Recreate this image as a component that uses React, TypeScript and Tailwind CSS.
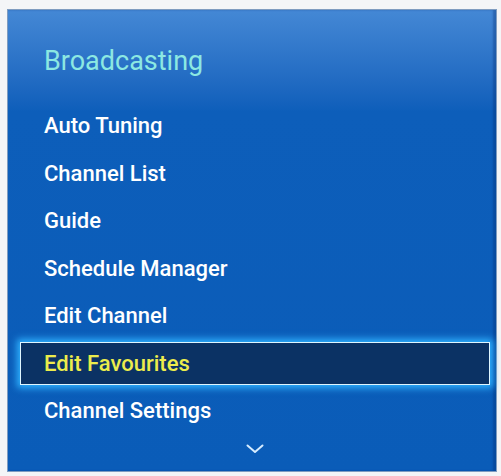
import React from 'react';

const items = [
  'Auto Tuning',
  'Channel List',
  'Guide',
  'Schedule Manager',
  'Edit Channel',
  'Edit Favourites',
  'Channel Settings',
];

const selected = 'Edit Favourites';

export default function App() {
  return (
    <div className="h-[476px] w-[501px] bg-[#f4f5f7] pl-[7px] pt-[9px] font-['Roboto','Liberation_Sans',sans-serif]">
      <div className="flex h-[463px] w-[490px] flex-col border border-[#7f9cc0] bg-linear-to-b from-[#4488d5] via-[#0d5eba] via-22% to-[#0a5cb8] shadow-[inset_-3px_0_2px_rgba(0,40,110,0.35)]">
        <div className="flex h-[92px] items-center pl-[36px] pt-[11px] text-[27px] font-normal text-[#8ce8e2]">
          Broadcasting
        </div>
        {items.map((item) =>
          item === selected ? (
            <div key={item} className="flex h-[47.5px] items-center pl-[12px] pr-[6px]">
              <div className="flex h-[43px] w-full items-center border border-[#dff6ff] bg-[#0b3264] pl-[23px] text-[22px] font-medium text-[#ecec4c] shadow-[0_0_7px_3px_#2fb2ff]">
                {item}
              </div>
            </div>
          ) : (
            <div key={item} className="flex h-[47.5px] items-center pl-[36px] text-[22px] font-medium text-white">
              {item}
            </div>
          ),
        )}
        <div className="flex flex-1 items-center justify-center pb-[8px] pl-[6px]">
          <svg width="18" height="10" viewBox="0 0 18 10" fill="none">
            <path d="M1.5 1.5 L9 8 L16.5 1.5" stroke="#d6ecff" strokeWidth="2" strokeLinecap="round" strokeLinejoin="round" />
          </svg>
        </div>
      </div>
    </div>
  );
}
